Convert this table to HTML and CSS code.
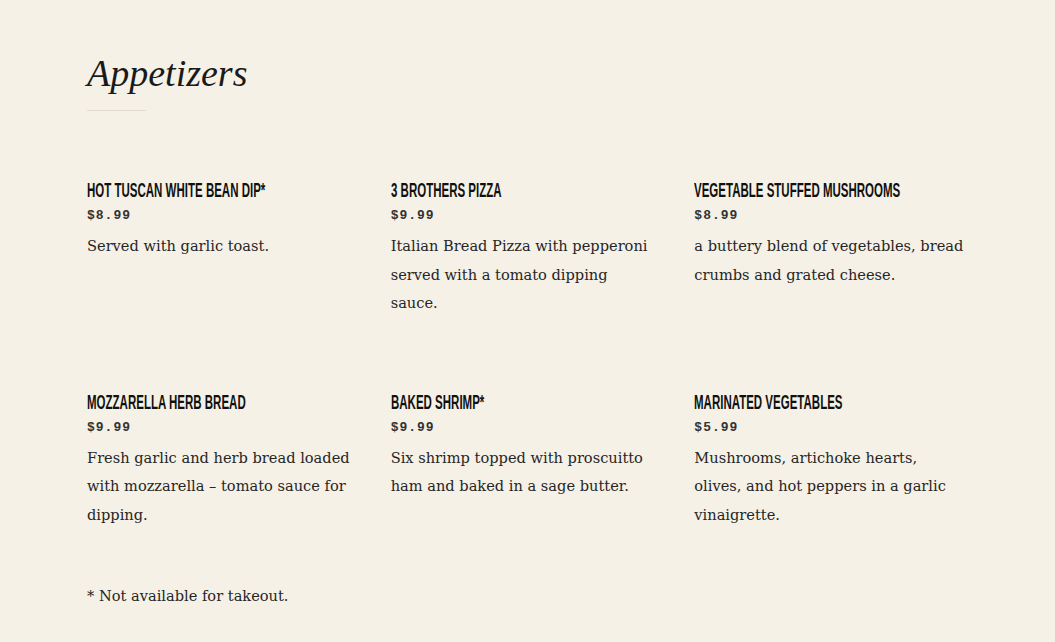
FILE: index.html
```html
<!DOCTYPE html>
<html lang="en">
<head>
<meta charset="utf-8">
<title>Appetizers</title>
<link rel="stylesheet" href="styles.css">
</head>
<body>
<main class="menu">
  <h1 class="title">Appetizers</h1>
  <div class="divider"></div>
  <div class="grid">
    <div class="item">
      <h2 class="name"><span>Hot Tuscan White Bean Dip*</span></h2>
      <div class="price">$8.99</div>
      <p class="desc">Served with garlic toast.</p>
    </div>
    <div class="item">
      <h2 class="name"><span>3 Brothers Pizza</span></h2>
      <div class="price">$9.99</div>
      <p class="desc">Italian Bread Pizza with pepperoni served with a tomato dipping<br>sauce.</p>
    </div>
    <div class="item">
      <h2 class="name"><span>Vegetable Stuffed Mushrooms</span></h2>
      <div class="price">$8.99</div>
      <p class="desc">a buttery blend of vegetables, bread crumbs and grated cheese.</p>
    </div>
    <div class="item">
      <h2 class="name"><span>Mozzarella Herb Bread</span></h2>
      <div class="price">$9.99</div>
      <p class="desc">Fresh garlic and herb bread loaded with mozzarella – tomato sauce for dipping.</p>
    </div>
    <div class="item">
      <h2 class="name"><span>Baked Shrimp*</span></h2>
      <div class="price">$9.99</div>
      <p class="desc">Six shrimp topped with proscuitto ham and baked in a sage butter.</p>
    </div>
    <div class="item">
      <h2 class="name"><span>Marinated Vegetables</span></h2>
      <div class="price">$5.99</div>
      <p class="desc">Mushrooms, artichoke hearts, olives, and hot peppers in a garlic vinaigrette.</p>
    </div>
  </div>
  <p class="note">* Not available for takeout.</p>
</main>
</body>
</html>
```
FILE: styles.css
```css
html, body {
  margin: 0;
  padding: 0;
  background: #f5f1e6;
}
body {
  color: #262626;
  font-family: "DejaVu Serif", serif;
}
.menu {
  padding: 48px 87px 0 87px;
}
.title {
  margin: 0;
  font-family: "Liberation Serif", serif;
  font-style: italic;
  font-weight: normal;
  font-size: 38px;
  line-height: 50px;
  color: #1a1a1a;
}
.divider {
  width: 59px;
  height: 1px;
  background: #e2ddd0;
  margin-top: 12px;
}
.grid {
  display: grid;
  grid-template-columns: repeat(3, minmax(0, 1fr));
  column-gap: 30px;
  row-gap: 73px;
  margin-top: 68px;
}
.name {
  margin: 0;
  font-family: "Liberation Sans", sans-serif;
  font-weight: bold;
  text-transform: uppercase;
  font-size: 19.5px;
  line-height: 22px;
  color: #111;
  white-space: nowrap;
}
.name span {
  display: inline-block;
  transform: scaleX(0.59);
  transform-origin: left center;
}
.price {
  margin-top: 5px;
  font-family: "Liberation Mono", monospace;
  font-weight: bold;
  font-size: 13px;
  line-height: 20px;
  letter-spacing: 1px;
  color: #333;
}
.desc {
  margin: 6px 0 0 0;
  font-size: 14.6px;
  line-height: 28.5px;
}
.note {
  margin: 53px 0 0 0;
  font-size: 14.6px;
  line-height: 28px;
}
```
